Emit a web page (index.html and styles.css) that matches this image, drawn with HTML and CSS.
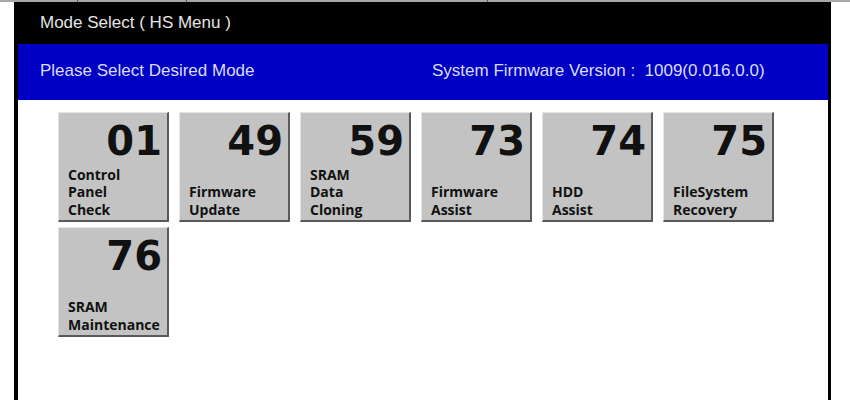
FILE: index.html
```html
<!DOCTYPE html>
<html>
<head>
<meta charset="utf-8">
<link rel="stylesheet" href="styles.css">
</head>
<body>
<div class="topline">
  <span class="cell c1"></span><span class="cell c2"></span><span class="cell c3"></span>
</div>
<div class="frame">
  <div class="title">Mode Select ( HS Menu )</div>
  <div class="bar">
    <div class="bar-left">Please Select Desired Mode</div>
    <div class="bar-right">System Firmware Version :&nbsp; 1009(0.016.0.0)</div>
  </div>
  <div class="content">
    <div class="grid">
      <div class="btn"><div class="num">01</div><div class="label">Control<br>Panel<br>Check</div></div>
      <div class="btn"><div class="num">49</div><div class="label">Firmware<br>Update</div></div>
      <div class="btn"><div class="num">59</div><div class="label">SRAM<br>Data<br>Cloning</div></div>
      <div class="btn"><div class="num">73</div><div class="label">Firmware<br>Assist</div></div>
      <div class="btn"><div class="num">74</div><div class="label">HDD<br>Assist</div></div>
      <div class="btn"><div class="num">75</div><div class="label">FileSystem<br>Recovery</div></div>
      <div class="btn"><div class="num">76</div><div class="label">SRAM<br>Maintenance</div></div>
    </div>
  </div>
</div>
</body>
</html>
```
FILE: styles.css
```css
html, body {
  margin: 0;
  padding: 0;
  background: #fff;
  overflow: hidden;
}
body {
  width: 850px;
  height: 400px;
  font-family: "Liberation Sans", Arial, sans-serif;
}
.topline {
  height: 2px;
  background: #a8a8a8;
  display: flex;
}
.cell {
  height: 2px;
  border-right: 1px solid #555;
}
.c1 { width: 77px; }
.c2 { width: 108px; }
.c3 { width: 300px; }
.frame {
  margin-left: 14px;
  width: 817px;
  height: 398px;
  box-sizing: border-box;
  background: #000;
  padding: 0 3px 0 4px;
  display: flex;
  flex-direction: column;
}
.title {
  height: 42px;
  display: flex;
  align-items: center;
  padding-left: 22px;
  color: #e4e4e4;
  font-size: 17px;
}
.bar {
  height: 56px;
  background: #0000c4;
  display: flex;
  align-items: center;
  padding-left: 22px;
  padding-bottom: 3px;
  box-sizing: border-box;
  color: #dcdcff;
  font-size: 17px;
}
.bar-left {
  width: 392px;
}
.content {
  flex: 1;
  background: #fff;
  padding: 12px 0 0 40px;
}
.grid {
  display: grid;
  grid-template-columns: repeat(6, 111px);
  grid-auto-rows: 110px;
  column-gap: 10px;
  row-gap: 5px;
}
.btn {
  box-sizing: border-box;
  background: #c3c3c3;
  border-top: 1px solid #e4e4e4;
  border-left: 1px solid #e4e4e4;
  border-right: 2px solid #5a5a5a;
  border-bottom: 2px solid #5a5a5a;
  display: flex;
  flex-direction: column;
  justify-content: space-between;
  padding: 8px 8px 2px 9px;
  font-family: "Open Sans", "Noto Sans", sans-serif;
  font-weight: bold;
  color: #111;
}
.num {
  text-align: right;
  font-family: "DejaVu Sans", sans-serif;
  font-size: 40px;
  line-height: 40px;
  margin-right: -3px;
}
.label {
  font-size: 14px;
  line-height: 17.5px;
}
```
